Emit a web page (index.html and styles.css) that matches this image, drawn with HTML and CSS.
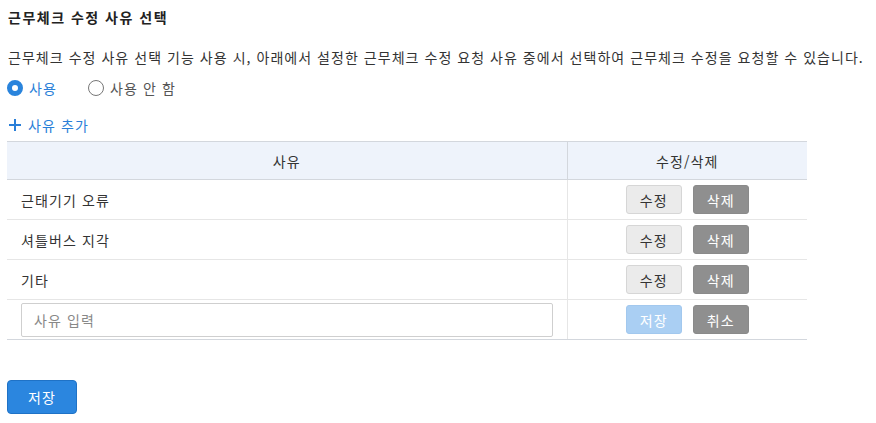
FILE: index.html
```html
<!DOCTYPE html>
<html lang="ko">
<head>
<meta charset="utf-8">
<link rel="stylesheet" href="styles.css">
</head>
<body>
<div class="page">
  <h2 class="title">근무체크 수정 사유 선택</h2>
  <p class="desc">근무체크 수정 사유 선택 기능 사용 시, 아래에서 설정한 근무체크 수정 요청 사유 중에서 선택하여 근무체크 수정을 요청할 수 있습니다.</p>
  <div class="radios">
    <label class="radio on"><span class="dot"></span>사용</label>
    <label class="radio"><span class="dot"></span>사용 안 함</label>
  </div>
  <div class="add"><svg width="14" height="14" viewBox="0 0 14 14"><path d="M7 1v12M1 7h12" stroke="#2a7fd8" stroke-width="2"/></svg><span>사유 추가</span></div>
  <table class="grid">
    <thead>
      <tr><th class="c1">사유</th><th class="c2">수정/삭제</th></tr>
    </thead>
    <tbody>
      <tr><td class="c1">근태기기 오류</td><td class="c2"><div class="btns"><button class="b edit">수정</button><button class="b del">삭제</button></div></td></tr>
      <tr><td class="c1">셔틀버스 지각</td><td class="c2"><div class="btns"><button class="b edit">수정</button><button class="b del">삭제</button></div></td></tr>
      <tr><td class="c1">기타</td><td class="c2"><div class="btns"><button class="b edit">수정</button><button class="b del">삭제</button></div></td></tr>
      <tr><td class="c1"><input class="inp" placeholder="사유 입력"></td><td class="c2"><div class="btns"><button class="b save">저장</button><button class="b del">취소</button></div></td></tr>
    </tbody>
  </table>
  <button class="primary">저장</button>
</div>
</body>
</html>
```
FILE: styles.css
```css
* { box-sizing: border-box; }
body { margin: 0; background: #fff; font-family: "Noto Sans CJK KR", "Noto Sans", sans-serif; color: #333; font-size: 14px; letter-spacing: 1.1px; }
.page { padding: 5px 7px 0 7px; }
.title { margin: 0 0 0 1px; font-size: 14px; font-weight: 700; color: #222; line-height: 24px; letter-spacing: 1.5px; }
.desc { margin: 18px 0 0 1px; line-height: 20px; color: #333; white-space: nowrap; letter-spacing: 1.04px; }
.radios { display: flex; gap: 31px; margin-top: 10px; height: 22px; align-items: center; }
.radio { display: flex; align-items: center; gap: 6px; color: #555; }
.radio .dot { width: 16px; height: 16px; border-radius: 50%; border: 1px solid #777; display: inline-block; background: #fff; }
.radio.on { color: #2a7fd8; }
.radio.on .dot { border: 5px solid #2a84dc; }
.add { display: flex; align-items: center; gap: 6px; color: #2a7fd8; margin-top: 16px; height: 20px; padding-left: 1px; }
.grid { margin-top: 6px; border-collapse: collapse; width: 800px; }
.grid th { height: 38px; background: #eef3fb; border-top: 1px solid #d3d7dd; border-bottom: 1px solid #d3d7dd; font-weight: 400; color: #333; }
.grid th.c1 { border-right: 1px solid #d3d7dd; width: 560px; }
.grid td { height: 40px; border-bottom: 1px solid #e6e6e6; }
.grid tr:last-child td { border-bottom: 1px solid #d3d7dd; }
.grid td.c1 { border-right: 1px solid #e6e6e6; padding-left: 14px; text-align: left; }
.btns { display: flex; justify-content: center; gap: 11px; }
.b { width: 56px; height: 29px; border-radius: 3px; font: inherit; font-size: 14px; letter-spacing: 1px; border: 1px solid transparent; padding: 0; }
.edit { background: #ebebeb; border-color: #d6d6d6; color: #333; }
.del { background: #8f8f8f; border-color: #8a8a8a; color: #fff; }
.save { background: #aacff3; border-color: #a2c8ee; color: #fff; }
.inp { width: 532px; height: 34px; border: 1px solid #cfcfcf; border-radius: 2px; padding: 0 12px; font: inherit; font-size: 14px; letter-spacing: 1.1px; color: #333; }
.inp::placeholder { color: #888; }
.primary { margin-top: 40px; width: 70px; height: 34px; background: #2b86df; border: 1px solid #1f72c6; border-radius: 4px; color: #fff; font: inherit; font-size: 14px; letter-spacing: 1px; padding: 0; }
```
